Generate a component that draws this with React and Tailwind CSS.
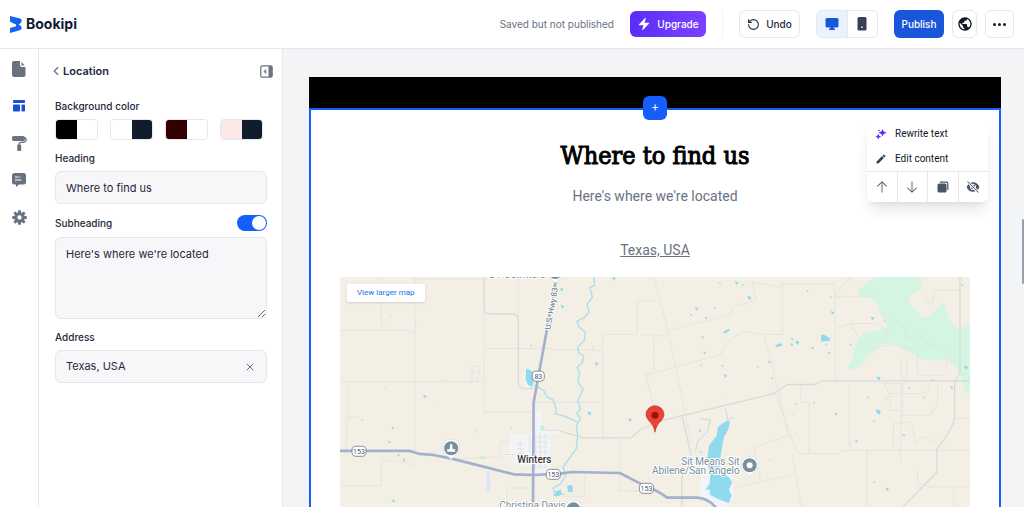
import { HiBolt, HiArrowUp, HiArrowDown, HiEyeSlash } from "react-icons/hi2";
import { MdEdit, MdPublic } from "react-icons/md";
import { LuRotateCcw, LuChevronLeft, LuX } from "react-icons/lu";

const swatches = [
    { id: "black", label: "Black and white", left: "bg-black", right: "bg-white" },
    { id: "white", label: "White and navy", left: "bg-white", right: "bg-[#111c2d]" },
    { id: "maroon", label: "Maroon and white", left: "bg-[#330002]", right: "bg-white" },
    { id: "pink", label: "Pink and navy", left: "bg-[#fbe6e8]", right: "bg-[#111c2d]" }
];

// Terrain shapes are drawn on a grid three times finer than the labels
const minorRoads = [
    "M255 36V555 M30 196H238L255 205 M154 36V180L166 195 M255 43H460 M30 350H460 M462 36V440H608",
    "M564 36V155 M462 250H665L672 255H817 M817 518V208H920V107H970 M610 412H817",
    "M55 350V470 M52 470L48 555 M50 455H85L98 468 M424 348L427 303H451L441 348Z M427 322H444",
    "M30 662H153V583 M385 580L510 575V528H550 M530 705V668H600 M762 628V693H700 M868 520V676H930 M153 585L225 590L245 600",
    "M945 325L960 385 M970 36L1012 196L1035 302L1082 535 M1012 196L1202 148L1204 128L1276 104L1264 50",
    "M930 209H970L1012 214 M970 210V318 M947 330L1170 268Q1200 210 1240 200L1300 208H1355V56 M947 330L980 465",
    "M1300 208L1338 356L1372 512L1270 545L1290 645 M1345 56H1513V345 M1264 50L1345 66 M1410 360V412H1435V565",
    "M1338 395L1400 565H1528L1532 556H1918 M1556 350V556 M1385 565L1395 625L1210 668 M1395 625L1412 726",
    "M1515 190L1555 175H1640 M1513 95L1530 70L1560 36 M1640 90L1600 95H1513 M1555 175L1605 245L1645 250",
    "M1645 242H1705L1760 260V330H1840 M1710 288H1728V342H1712Z M1660 355H1710V430 M1715 350V460 M1660 355L1678 390L1658 410",
    "M1678 385H1760L1795 378V350 M1678 385V435H1710V450H1800L1820 415V350 M1710 445V590 M1688 550V475L1740 470L1755 530L1780 515L1810 530",
    "M1870 460H1917 M1608 556V726 M1760 610V656L1800 665H1917 M1868 665V726 M1780 100L1800 120L1810 95V75H1885",
    "M1650 150L1700 170L1725 190V220L1765 210L1800 245L1830 240L1845 270V310 M1640 250L1670 200L1650 185"
];

const secondaryRoads = [
    "M462 36V130Q462 146 480 146H545Q564 148 564 165V350Q564 370 583 370H608",
    "M610 497H688L760 518H900Q915 510 930 492L1000 465L1330 385L1370 358H1450L1475 347H1917",
    "M1054 450L1082 570 M1060 620L1054 640V726 M1887 36V325L1871 348V460Q1860 500 1818 550V620L1715 726"
];

const creek =
    "M790 36L792 62L778 68L786 96L770 118L776 140L762 158L740 168L746 186L764 200L762 226L742 246L746 264L760 272L756 292L740 306L748 324L742 350L758 372L750 392L742 408L750 430L740 446L750 462L738 480L742 510L738 550L716 580L698 606L706 630L690 656L668 668L676 690L700 686";
const creekBranch = "M612 360L640 376L650 396L668 404L678 432L674 446L700 452L720 460L740 470";

const ponds = [
    [850, 41, 5], [694, 74, 5], [696, 125, 5], [182, 151, 2], [256, 174, 2], [603, 241, 3], [284, 394, 5],
    [166, 371, 2], [798, 296, 5], [777, 445, 6], [899, 464, 5], [188, 489, 4], [178, 531, 4], [96, 466, 3],
    [205, 570, 4], [222, 584, 4], [438, 499, 2], [543, 487, 2], [190, 707, 5], [718, 670, 8], [683, 684, 8],
    [345, 343, 2], [323, 421, 2], [787, 246, 2], [1168, 54, 3], [1218, 54, 5], [1256, 99, 6], [1098, 131, 5],
    [1081, 150, 3], [1153, 128, 3], [1127, 159, 4], [1236, 61, 3], [1430, 78, 3], [1505, 143, 5], [1500, 97, 3],
    [1116, 217, 4], [1122, 263, 4], [1400, 233, 6], [1384, 222, 4], [1383, 239, 4], [1445, 249, 4], [1495, 264, 4],
    [1486, 238, 3], [1184, 332, 5], [1176, 302, 3], [1111, 300, 3], [1316, 291, 4], [1281, 305, 3], [1324, 339, 3],
    [1186, 387, 2], [1396, 416, 3], [1450, 413, 3], [1516, 447, 4], [1389, 447, 2], [1642, 440, 8], [1629, 468, 3],
    [1643, 339, 6], [1611, 397, 3], [1577, 528, 4], [1719, 510, 4], [1905, 307, 6], [1862, 367, 4], [1779, 398, 3],
    [1625, 160, 5], [1662, 167, 3], [1559, 238, 3], [1110, 560, 3], [1108, 497, 4], [1630, 651, 3], [1669, 672, 5],
    [1397, 507, 2], [1705, 553, 2], [1711, 271, 2], [1735, 369, 3], [1805, 345, 3], [1895, 61, 3], [1318, 584, 2]
];

const townBlocks =
    "M560 535H580 M560 550H580 M560 565H580 M570 530V575 M598 508V560 M612 545H650 M615 505V610 M630 505V610 M645 505V610 M612 515H655 M612 530H655 M612 560H655 M612 590H650 M612 605H650 M580 590H655 M512 568H555";

const Logo = () => (
    <a href="#home" className="flex items-center gap-1 text-[#101b35]">
        <svg width="12" height="17" viewBox="0 0 36 51" aria-hidden="true">
            <path
                fill="#1464f4"
                d="M0 0L28 7Q36 9 35 16Q34 22 26 25.500Q34 28 35 35Q35 41 29 43L0 51V36L18 31V25.500L0 17Z"
            />
        </svg>
        <span className="text-[14px] leading-5 font-bold">Bookipi</span>
    </a>
);

const FileIcon = () => (
    <svg width="14" height="16" viewBox="0 0 14 16" fill="currentColor">
        <path d="M2 0H8V4Q8 6 10 6H13.500V14Q13.500 16 11.500 16H2Q0 16 0 14V2Q0 0 2 0Z" />
        <path d="M9.500 .8L12.600 4.500H9.500Z" />
    </svg>
);

const LayoutIcon = () => (
    <svg width="14" height="14" viewBox="0 0 14 14" fill="currentColor">
        <rect x="1" y="1" width="12" height="3" rx=".8" />
        <rect x="1" y="5.500" width="7" height="7" rx=".8" />
        <rect x="9.500" y="5.500" width="3.500" height="7" rx=".8" />
    </svg>
);

const RollerIcon = () => (
    <svg width="15" height="16" viewBox="0 0 15 16" fill="currentColor">
        <rect x="0" y="1" width="13" height="5" rx="1.800" />
        <path
            d="M12.500 3Q14.300 3 14.200 5Q14 6.700 12 7Q8 7.200 7.200 8.200V10"
            fill="none"
            stroke="currentColor"
            strokeWidth="1.300"
        />
        <rect x="5.200" y="9.500" width="4" height="6.500" rx="1.300" />
    </svg>
);

const ChatIcon = () => (
    <svg width="14" height="14" viewBox="0 0 14 14" fill="currentColor">
        <path
            fillRule="evenodd"
            d="M2.500 0H11.500Q14 0 14 2.500V9Q14 11.500 11.500 11.500H7L4 14V11.500H2.500Q0 11.500 0 9V2.500Q0 0 2.500 0ZM3 3.500V4.600H6.500V3.500ZM3 6.500V7.600H9.500V6.500ZM7.500 3.500V4.600H8.500V3.500Z"
        />
    </svg>
);

const GearIcon = () => (
    <svg width="15" height="15" viewBox="-8 -8 16 16" fill="currentColor">
        {[0, 45, 90, 135].map(angle => (
            <rect
                key={angle}
                x="-1.600"
                y="-7.800"
                width="3.200"
                height="15.600"
                rx=".7"
                transform={`rotate(${angle})`}
            />
        ))}
        <circle r="5.600" />
        <circle r="2.300" fill="#fff" />
    </svg>
);

const CollapseIcon = () => (
    <svg width="13" height="13" viewBox="0 0 13 13">
        <rect x=".8" y=".8" width="11.400" height="11.400" rx="1.500" fill="none" stroke="#6b7280" strokeWidth="1.200" />
        <rect x="8.500" y="1" width="3.500" height="11" fill="#6b7280" />
        <path d="M5.800 4.500L4 6.500L5.800 8.500Z" fill="#6b7280" stroke="#6b7280" strokeWidth=".6" />
    </svg>
);

const MonitorIcon = () => (
    <svg width="14" height="12" viewBox="0 0 14 12" fill="currentColor">
        <rect x=".5" y="0" width="13" height="9.500" rx="1.500" />
        <path d="M5.500 9H8.500V10.500H10V12H4V10.500H5.500Z" />
    </svg>
);

const PhoneIcon = () => (
    <svg width="10" height="14" viewBox="0 0 10 14" fill="currentColor">
        <path
            fillRule="evenodd"
            d="M2 0H8Q9.500 0 9.500 1.500V12Q9.500 13.500 8 13.500H2Q.5 13.500 .5 12V1.500Q.5 0 2 0ZM4.300 9.600V11H5.700V9.600Z"
        />
    </svg>
);

const SparklesIcon = () => (
    <svg width="12" height="12" viewBox="0 0 12 12" fill="#5b2cf8">
        <path d="M7.500 1L8.700 3.600L11.500 4.800L8.700 6L7.500 8.600L6.300 6L3.500 4.800L6.300 3.600Z" />
        <path d="M3.300 5.800L4.200 7.800L6.300 8.700L4.200 9.600L3.300 11.600L2.400 9.600L.3 8.700L2.400 7.800Z" />
        <circle cx="4" cy="2.500" r=".8" />
    </svg>
);

const CopyIcon = () => (
    <svg width="12" height="12" viewBox="0 0 12 12" fill="currentColor">
        <rect x=".5" y="2.500" width="9" height="9" rx="1.500" />
        <path d="M3 1.200H9.500Q10.800 1.200 10.800 2.500V9" fill="none" stroke="currentColor" strokeWidth="1.200" />
    </svg>
);

const Shield = ({ x, y, text, width = 14 }) => (
    <g>
        <rect
            x={x - width / 2}
            y={y - 5}
            width={width}
            height="10"
            rx="4"
            fill="#fff"
            stroke="#6d7681"
            strokeWidth=".8"
        />
        <text x={x} y={y + 3} textAnchor="middle" fontSize="7" fill="#4b5563">
            {text}
        </text>
    </g>
);

const PlacePin = ({ x, y, children }) => (
    <g transform={`translate(${x} ${y})`}>
        <path d="M0 11L-6.500 5Q-9.500 1 -8 -4Q-5 -9 0 -9Q5 -9 8 -4Q9.500 1 6.500 5Z" fill="#fff" stroke="#c9ced3" strokeWidth=".5" />
        <circle r="7" fill="#78909c" />
        {children}
    </g>
);

const Map = () => (
    <svg
        className="block h-[450px] w-full"
        viewBox="0 0 629 450"
        preserveAspectRatio="xMidYMin slice"
        fontFamily="Roboto, sans-serif"
        role="img"
        aria-label="Map of Winters, Texas"
    >
        <rect width="629" height="450" fill="#f3efe4" />
        <g transform="translate(-10 -12) scale(.33333)">
            <path
                fill="#d3f5e2"
                d="M1635 36H1770V75L1740 88L1733 112L1765 145L1772 160L1805 150L1833 113L1845 125L1850 160L1885 192L1917 180V390L1900 375L1885 325L1870 300L1845 280L1810 287L1765 280L1700 240L1650 235L1610 275L1585 305L1560 316L1552 306L1565 280L1575 230L1600 205L1665 190L1670 175L1645 140L1640 115L1620 100L1578 90L1590 68Z"
            />
            <g fill="none" stroke="#e4e4e2" strokeWidth="3">
                {minorRoads.map(d => (
                    <path key={d} d={d} />
                ))}
            </g>
            <g fill="none" stroke="#d8dadc" strokeWidth="4">
                {secondaryRoads.map(d => (
                    <path key={d} d={d} />
                ))}
            </g>
            <path
                fill="#f3f4f7"
                d="M538 508H600V497H612V440L632 435L636 470L645 480V497H688V506H660V620L610 622V600L575 605L545 590V572H510V562H540ZM583 315H592V368H583ZM1115 595L1190 610L1208 640V700L1195 726H1150L1105 692Z"
            />
            <path d={townBlocks} fill="none" stroke="#dfe2e8" strokeWidth="3" />
            <path fill="#c9efd9" d="M630 480H643V496H630ZM450 573H466V581H450Z" />
            <path fill="#dbe7f8" d="M469 615H476L482 650L478 682H469Z" />
            <g fill="none" stroke="#a9dfeb" strokeWidth="4" strokeLinejoin="round">
                <path d={creek} />
                <path d={creekBranch} />
            </g>
            <g fill="#8fdaee">
                {ponds.map(([x, y, r]) => (
                    <path key={`${x}-${y}`} d={`M${x - r} ${y - r}L${x + r} ${y - r / 2}L${x + r / 2} ${y + r}L${x - r / 2} ${y + r / 2}Z`} />
                ))}
                <path d="M588 310L606 318L612 340L606 366L592 358L586 340Z" />
                <path d="M1471 210L1480 208L1498 220V227L1471 229Z" />
                <path d="M1178 200L1196 190V196L1182 206Z M1334 242L1346 234L1356 240L1340 247Z" />
                <path d="M712 660H727V680H712Z M668 690L690 672L694 684L678 694Z" />
                <path d="M1190 465L1198 470L1192 495L1180 515L1172 560L1166 600L1175 625L1195 635L1205 650L1195 675L1203 690L1195 714L1160 700L1138 688L1137 672L1124 674L1137 655L1139 620L1128 590L1136 540L1158 512L1162 485Z" />
            </g>
            <path
                d="M1185 430L1192 465L1208 455M1108 460L1140 465L1130 500L1100 530L1095 560"
                fill="none"
                stroke="#c5dce2"
                strokeWidth="3"
            />
            <g fill="none" stroke="#a3b1cd" strokeWidth="8" strokeLinejoin="round">
                <path d="M30 557H240L268 566L310 569L365 580L550 627L610 629L690 625L725 620L868 623L940 660Q980 675 1010 697H1100Q1135 700 1155 726L1195 750" />
                <path d="M676 50L610 412L608 740" />
            </g>
        </g>

        <Shield x={198} y={99} text="83" width={12} />
        <Shield x={19} y={174} text="153" />
        <Shield x={213} y={197} text="153" />
        <Shield x={306} y={211} text="153" />

        <g stroke="#fff" strokeWidth="2" paintOrder="stroke">
            <text transform="translate(210 53) rotate(-80)" fontSize="8" fill="#5b6573">
                U.S. Hwy 83
            </text>
            <text x="194" y="186" textAnchor="middle" fontSize="10" fontWeight="500" fill="#333">
                Winters
            </text>
            <g fontSize="10" fill="#78909c">
                <text x="205" y="1" textAnchor="end">
                    DT Outfitters
                </text>
                <text x="399" y="188" textAnchor="end">
                    Sit Means Sit
                </text>
                <text x="399" y="197" textAnchor="end">
                    Abilene/San Angelo
                </text>
                <text x="159" y="232">
                    Christina Davis
                </text>
            </g>
        </g>

        <PlacePin x={215} y={-5} />
        <PlacePin x={111} y={171}>
            <path d="M-1 -4H1L1.500 1H4V3.500H-4V1H-1.500Z" fill="#fff" />
        </PlacePin>
        <PlacePin x={409} y={188}>
            <circle r="3" fill="#fff" />
        </PlacePin>
        <PlacePin x={233} y={232} />

        <path d="M314.500 155Q313.500 148 308 143Q305.500 140 305.500 137.500A9 9 0 1 1 323.500 137.500Q323.500 140 321 143Q315.500 148 314.500 155Z" fill="#ea4335" stroke="#c5221f" strokeWidth=".6" />
        <circle cx="314.500" cy="138" r="3.500" fill="#a50e0e" />
    </svg>
);

const Header = () => (
    <header className="flex h-[49px] shrink-0 items-center justify-between border-b border-gray-200 bg-white px-[10px]">
        <Logo />
        <div className="flex items-center">
            <span className="mr-4 text-[10px] text-gray-500">
                Saved but not published
            </span>
            <button className="flex h-[26px] w-[76px] items-center justify-center gap-[6px] rounded-md bg-linear-to-r from-[#5b2cf8] to-[#7a42ff] text-[10px] font-medium text-white">
                <HiBolt className="h-[14px] w-[14px]" />
                Upgrade
            </button>
            <div className="mx-4 h-[26px] w-px bg-gray-100" />
            <button className="mr-4 flex h-7 w-[61px] items-center justify-center gap-[6px] rounded-md border border-gray-200 text-[10px] font-medium text-gray-800">
                <LuRotateCcw className="h-[13px] w-[13px]" />
                Undo
            </button>
            <div className="mr-4 flex h-7 w-[62px] overflow-hidden rounded-md border border-gray-200">
                <button
                    aria-label="Desktop preview"
                    className="flex flex-1 items-center justify-center border-r border-gray-200 bg-[#e8f3ff] text-[#1a56db]"
                >
                    <MonitorIcon />
                </button>
                <button
                    aria-label="Mobile preview"
                    className="flex flex-1 items-center justify-center text-gray-700"
                >
                    <PhoneIcon />
                </button>
            </div>
            <button className="mr-2 flex h-7 w-[50px] items-center justify-center rounded-md bg-[#1a56db] text-[10px] font-medium text-white">
                Publish
            </button>
            <button
                aria-label="View site"
                className="mr-2 flex h-7 w-[25px] items-center justify-center rounded-md border border-gray-200 text-gray-900"
            >
                <MdPublic className="h-4 w-4" />
            </button>
            <button
                aria-label="More options"
                className="flex h-7 w-[29px] items-center justify-center gap-[2px] rounded-md border border-gray-200"
            >
                <span className="h-[3px] w-[3px] rounded-full bg-gray-900" />
                <span className="h-[3px] w-[3px] rounded-full bg-gray-900" />
                <span className="h-[3px] w-[3px] rounded-full bg-gray-900" />
            </button>
        </div>
    </header>
);

const railItems = [
    { label: "Pages", Icon: FileIcon },
    { label: "Sections", Icon: LayoutIcon, active: true },
    { label: "Theme", Icon: RollerIcon },
    { label: "Messages", Icon: ChatIcon },
    { label: "Settings", Icon: GearIcon }
];

const Rail = () => (
    <nav className="flex w-[39px] shrink-0 flex-col items-center gap-[13px] border-r border-gray-200 bg-white pt-2">
        {railItems.map(({ label, Icon, active }) => (
            <button
                key={label}
                aria-label={label}
                className={`flex h-6 w-6 items-center justify-center ${
                    active ? "text-[#1a4fdb]" : "text-gray-500"
                }`}
            >
                <Icon />
            </button>
        ))}
    </nav>
);

const SettingsPanel = () => (
    <aside className="w-[244px] shrink-0 border-r border-gray-200 bg-white pt-[14px] pr-[15px] pl-4 text-gray-800">
        <div className="-mx-[6px] flex items-center justify-between">
            <button className="flex h-4 items-center text-[11px] font-semibold">
                <LuChevronLeft className="h-[14px] w-[14px] text-gray-500" />
                Location
            </button>
            <button aria-label="Collapse panel">
                <CollapseIcon />
            </button>
        </div>

        <div className="mt-5 text-[10px] leading-[14px] font-medium">
            Background color
        </div>
        <div className="mt-[6px] flex gap-3">
            {swatches.map(s => (
                <button
                    key={s.id}
                    aria-label={s.label}
                    className="flex h-[21px] w-[43px] overflow-hidden rounded border border-gray-200"
                >
                    <span className={`h-full flex-1 ${s.left}`} />
                    <span className={`h-full flex-1 ${s.right}`} />
                </button>
            ))}
        </div>

        <label htmlFor="heading" className="mt-[11px] block text-[10px] leading-[14px] font-medium">
            Heading
        </label>
        <input
            id="heading"
            defaultValue="Where to find us"
            className="mt-[6px] h-[33px] w-full rounded-md border border-gray-200 bg-[#f7f7f9] px-[10px] text-[11px]"
        />

        <div className="mt-[11px] flex h-4 items-center justify-between">
            <label htmlFor="subheading" className="text-[10px] leading-[14px] font-medium">
                Subheading
            </label>
            <input
                type="checkbox"
                aria-label="Show subheading"
                defaultChecked
                className="flex h-4 w-[30px] appearance-none items-center rounded-full bg-gray-300 px-px before:h-[14px] before:w-[14px] before:rounded-full before:bg-white checked:justify-end checked:bg-[#155dfc]"
            />
        </div>
        <textarea
            id="subheading"
            defaultValue="Here's where we're located"
            className="mt-[6px] block h-[82px] w-full rounded-md border border-gray-200 bg-[#f7f7f9] px-[10px] py-2 text-[11px] leading-4"
        />

        <label htmlFor="address" className="mt-[11px] block text-[10px] leading-[14px] font-medium">
            Address
        </label>
        <div className="mt-[6px] flex h-[33px] items-center rounded-md border border-gray-200 bg-[#f7f7f9] px-[10px]">
            <input
                id="address"
                defaultValue="Texas, USA"
                className="min-w-0 flex-1 text-[11px]"
            />
            <button aria-label="Clear address">
                <LuX className="h-3 w-3 text-gray-500" />
            </button>
        </div>
    </aside>
);

const sectionActions = [
    { label: "Move up", Icon: HiArrowUp },
    { label: "Move down", Icon: HiArrowDown },
    { label: "Duplicate", Icon: CopyIcon },
    { label: "Hide", Icon: HiEyeSlash }
];

const SectionMenu = () => (
    <div className="absolute top-[11px] right-[11px] w-[121px] rounded-md bg-white text-[10px] text-gray-900 shadow-lg">
        <button className="flex h-[25px] w-full items-center gap-2 pl-2">
            <SparklesIcon />
            Rewrite text
        </button>
        <button className="flex h-[25px] w-full items-center gap-2 pl-2">
            <MdEdit className="h-3 w-3 text-gray-700" />
            Edit content
        </button>
        <div className="flex h-[31px] divide-x divide-gray-200 border-t border-gray-200">
            {sectionActions.map(({ label, Icon }) => (
                <button
                    key={label}
                    aria-label={label}
                    className="flex flex-1 items-center justify-center text-gray-600"
                >
                    <Icon className="h-[14px] w-[14px]" />
                </button>
            ))}
        </div>
    </div>
);

const Preview = () => (
    <main className="relative min-w-0 flex-1 overflow-hidden bg-gray-100 pt-7 pr-[23px] pl-[26px]">
        <div className="h-[31px] bg-black" />
        <section className="relative border-2 border-[#155dfc] bg-white px-[29px] pt-[30px] text-center font-['Roboto',sans-serif]">
            <button
                aria-label="Add section"
                className="absolute -top-[14px] left-1/2 flex h-6 w-6 -translate-x-1/2 items-center justify-center rounded-md bg-[#155dfc] text-[11px] text-white"
            >
                +
            </button>
            <SectionMenu />
            <h1 className="font-['Roboto_Slab','DejaVu_Serif_Condensed','DejaVu_Serif',serif] text-[25px] leading-8 text-black [-webkit-text-stroke:1px_black]">
                Where to find us
            </h1>
            <p className="mt-[14px] text-[14px] leading-5 text-gray-500">
                Here's where we're located
            </p>
            <a href="#map" className="mt-[34px] inline-block text-[14px] leading-5 text-gray-500 underline">
                Texas, USA
            </a>
            <div className="relative mt-[15px]">
                <Map />
                <a
                    href="#larger-map"
                    className="absolute top-[7px] left-[7px] rounded-xs bg-white px-[10px] text-[8px] leading-[18px] text-[#1a73e8] shadow"
                >
                    View larger map
                </a>
            </div>
        </section>
        <div className="absolute top-[170px] right-0 h-[65px] w-[2px] rounded-full bg-gray-400" />
    </main>
);

const App = () => (
    <div className="flex h-screen flex-col overflow-hidden font-['Inter',sans-serif]">
        <Header />
        <div className="flex min-h-0 flex-1">
            <Rail />
            <SettingsPanel />
            <Preview />
        </div>
    </div>
);

export default App;
